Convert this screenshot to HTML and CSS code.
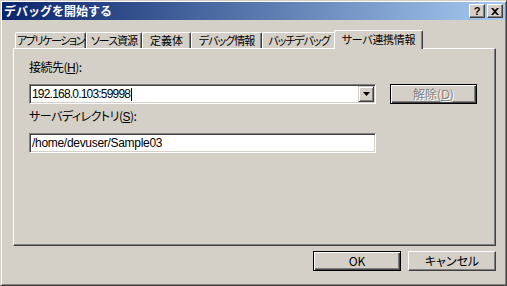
FILE: index.html
```html
<!DOCTYPE html>
<html lang="ja">
<head>
  <meta charset="UTF-8">
  <title>デバッグを開始する</title>
  <link rel="stylesheet" href="styles.css">
</head>
<body>

  <div class="window">
    <div class="titlebar">
      <span class="title">デバッグを開始する</span>
      <div class="caption-buttons">
        <span class="cap-btn help">?</span>
        <span class="cap-btn">
          <svg width="8" height="7" viewBox="0 0 8 7">
            <path d="M0 0h2l2 2 2-2h2L5 3.5 8 7H6L4 5 2 7H0l3-3.5z" fill="#000"/>
          </svg>
        </span>
      </div>
    </div>

    <div class="dialog-body">
      <div class="tabs">
        <div class="tab t-app">アプリケーション</div>
        <div class="tab t-src">ソース資源</div>
        <div class="tab t-def">定義体</div>
        <div class="tab t-dbg">デバッグ情報</div>
        <div class="tab t-batch">バッチデバッグ</div>
        <div class="tab active t-srv">サーバ連携情報</div>
      </div>

      <div class="panel">
        <div class="label">接続先(<u>H</u>):</div>
        <div class="row">
          <div class="combo">
            <span class="field-text">192.168.0.103:59998<span class="caret"></span></span>
            <span class="drop-btn">
              <svg width="7" height="4" viewBox="0 0 7 4"><path d="M0 0h7L3.5 4z" fill="#000"/></svg>
            </span>
          </div>
          <button class="btn default disabled release">解除(<u>D</u>)</button>
        </div>
        <div class="label second">サーバディレクトリ(<u>S</u>):</div>
        <div class="textbox">
          <span class="field-text">/home/devuser/Sample03</span>
        </div>
      </div>

      <div class="footer">
        <button class="btn default">OK</button>
        <button class="btn">キャンセル</button>
      </div>
    </div>
  </div>

</body>
</html>
```

FILE: styles.css
```css
body {
  margin: 0;
  background: #d4d0c8;
  font-family: "Noto Sans CJK JP", sans-serif;
  font-size: 12px;
  color: #000;
}
/* Classic raised window frame */
.window {
  box-sizing: border-box;
  width: 507px;
  height: 286px;
  padding: 1px;
  background: #d4d0c8;
  border: 1px solid;
  border-color: #d4d0c8 #404040 #404040 #d4d0c8;
  box-shadow: inset 1px 1px #fff, inset -1px -1px #808080;
}
.titlebar {
  display: flex;
  align-items: center;
  justify-content: space-between;
  height: 18px;
  padding: 0 2px 0 2px;
  background: linear-gradient(to right, #0a246a, #a6caf0);
}
.title {
  color: #fff;
  font-weight: bold;
  font-size: 12px;
  line-height: 18px;
}
.caption-buttons {
  display: flex;
  gap: 2px;
}
.cap-btn {
  box-sizing: border-box;
  display: flex;
  align-items: center;
  justify-content: center;
  width: 16px;
  height: 14px;
  background: #d4d0c8;
  border: 1px solid;
  border-color: #fff #404040 #404040 #fff;
  box-shadow: inset -1px -1px #808080;
  font-family: "Liberation Sans", sans-serif;
  font-weight: bold;
  font-size: 11px;
  line-height: 12px;
}
.dialog-body {
  padding: 10px 9px 0 11px;
}
/* Tab strip */
.tabs {
  display: flex;
  align-items: flex-end;
  height: 18px;
  padding-left: 2px;
}
.tab {
  box-sizing: border-box;
  height: 16px;
  border-top: 1px solid #fff;
  border-left: 1px solid #fff;
  border-right: 1px solid #404040;
  border-radius: 2px 2px 0 0;
  box-shadow: inset -1px 0 #808080;
  text-align: center;
  font-size: 11px;
  line-height: 14px;
  font-feature-settings: "palt";
  letter-spacing: -1px;
  white-space: nowrap;
}
.t-app { width: 71px; letter-spacing: -1.4px; }
.t-src { width: 56px; }
.t-def { width: 49px; letter-spacing: 0; }
.t-dbg { width: 71px; }
.t-batch { width: 74px; }
.t-srv { width: 89px; }
.tab.active {
  position: relative;
  z-index: 1;
  height: 19px;
  margin: 0 -2px -1px -2px;
  background: #d4d0c8;
  line-height: 16px;
  letter-spacing: -0.3px;
}
.panel {
  box-sizing: border-box;
  height: 198px;
  padding: 11px 15px 0 15px;
  border: 1px solid;
  border-color: #fff #404040 #404040 #fff;
  box-shadow: inset -1px -1px #808080;
}
.label {
  line-height: 14px;
  font-feature-settings: "palt";
  letter-spacing: -0.5px;
}
.label u {
  font-family: "Liberation Sans", sans-serif;
}
.label.second {
  margin-top: 5px;
}
.row {
  display: flex;
  align-items: flex-start;
  margin-top: 9px;
}
/* Sunken edit fields */
.combo, .textbox {
  box-sizing: border-box;
  position: relative;
  display: flex;
  align-items: center;
  width: 347px;
  height: 20px;
  background: #fff;
  border: 1px solid;
  border-color: #808080 #fff #fff #808080;
  box-shadow: inset 1px 1px #404040, inset -1px -1px #d4d0c8;
}
.textbox {
  margin-top: 9px;
}
.field-text {
  display: flex;
  align-items: center;
  padding-left: 2px;
  font-family: "Liberation Sans", sans-serif;
  font-size: 12px;
  letter-spacing: -0.3px;
  line-height: 14px;
}
.combo .field-text {
  letter-spacing: -0.8px;
}
.caret {
  display: inline-block;
  width: 1px;
  height: 13px;
  margin-left: 1px;
  background: #000;
}
.drop-btn {
  box-sizing: border-box;
  position: absolute;
  top: 1px;
  right: 1px;
  display: flex;
  align-items: center;
  justify-content: center;
  width: 16px;
  height: 16px;
  background: #d4d0c8;
  border: 1px solid;
  border-color: #d4d0c8 #404040 #404040 #d4d0c8;
  box-shadow: inset 1px 1px #fff, inset -1px -1px #808080;
}
/* Push buttons */
.btn {
  box-sizing: border-box;
  width: 88px;
  height: 20px;
  padding: 0;
  background: #d4d0c8;
  border: 1px solid;
  border-color: #fff #404040 #404040 #fff;
  box-shadow: inset -1px -1px #808080;
  font-family: "Noto Sans CJK JP", sans-serif;
  font-size: 12px;
  line-height: 14px;
  color: #000;
  font-feature-settings: "palt";
}
.btn.default {
  border-color: #000;
  box-shadow: inset 1px 1px #fff, inset -1px -1px #404040, inset -2px -2px #808080;
}
.btn.disabled {
  color: #808080;
  text-shadow: 1px 1px #fff;
}
.btn u {
  font-family: "Liberation Sans", sans-serif;
}
.release {
  width: 87px;
  margin-left: 14px;
}
.footer {
  display: flex;
  justify-content: flex-end;
  gap: 7px;
  margin-top: 5px;
}
```
